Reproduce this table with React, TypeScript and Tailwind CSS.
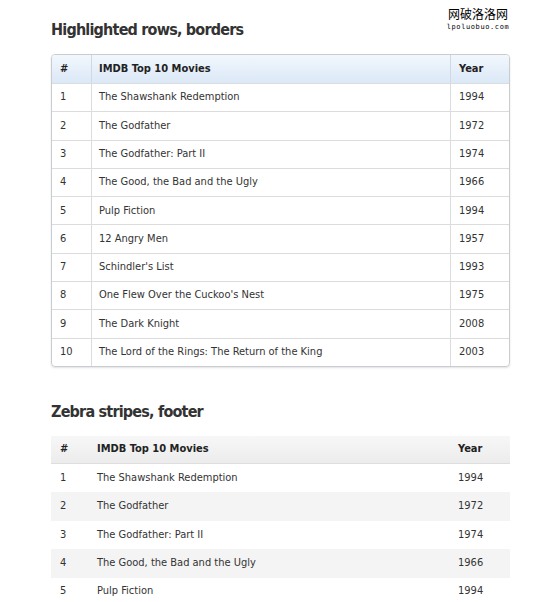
import React from "react";

const movies = [
  { id: 1, title: "The Shawshank Redemption", year: 1994 },
  { id: 2, title: "The Godfather", year: 1972 },
  { id: 3, title: "The Godfather: Part II", year: 1974 },
  { id: 4, title: "The Good, the Bad and the Ugly", year: 1966 },
  { id: 5, title: "Pulp Fiction", year: 1994 },
  { id: 6, title: "12 Angry Men", year: 1957 },
  { id: 7, title: "Schindler's List", year: 1993 },
  { id: 8, title: "One Flew Over the Cuckoo's Nest", year: 1975 },
  { id: 9, title: "The Dark Knight", year: 2008 },
  { id: 10, title: "The Lord of the Rings: The Return of the King", year: 2003 },
];

const font = { fontFamily: '"DejaVu Sans Condensed", "DejaVu Sans", sans-serif' };

// Tabla con bordes y cabecera azul
function BorderedTable() {
  return (
    <div className="w-[459px] rounded-[4px] border border-[#c9cdd2] overflow-hidden shadow-[0_1px_2px_rgba(0,0,0,0.12)]">
      <div className="grid grid-cols-[40px_359px_1fr] h-[28px] bg-gradient-to-b from-[#f2f7fd] to-[#dbe8f7] font-bold text-[#222]">
        <div className="pl-[8px] flex items-center border-r border-[#cfd8e3]">#</div>
        <div className="pl-[7px] flex items-center border-r border-[#cfd8e3]">IMDB Top 10 Movies</div>
        <div className="pl-[8px] flex items-center">Year</div>
      </div>
      {movies.map((m) => (
        <div key={m.id} className="grid grid-cols-[40px_359px_1fr] h-[28.3px] border-t border-[#dcdcdc] text-[#333]">
          <div className="pl-[8px] flex items-center border-r border-[#dcdcdc]">{m.id}</div>
          <div className="pl-[7px] flex items-center border-r border-[#dcdcdc]">{m.title}</div>
          <div className="pl-[8px] flex items-center">{m.year}</div>
        </div>
      ))}
    </div>
  );
}

// Tabla con filas alternas
function ZebraTable() {
  return (
    <div className="w-[459px]">
      <div className="grid grid-cols-[37px_362px_1fr] h-[28px] bg-gradient-to-b from-[#f7f7f7] to-[#ececec] border-b border-[#dedede] font-bold text-[#222]">
        <div className="pl-[9px] flex items-center">#</div>
        <div className="pl-[9px] flex items-center">IMDB Top 10 Movies</div>
        <div className="pl-[8px] flex items-center">Year</div>
      </div>
      {movies.slice(0, 5).map((m, i) => (
        <div
          key={m.id}
          className={`grid grid-cols-[37px_362px_1fr] h-[28.4px] text-[#333] ${i % 2 === 1 ? "bg-[#f4f4f4]" : "bg-white"}`}
        >
          <div className="pl-[9px] flex items-center">{m.id}</div>
          <div className="pl-[9px] flex items-center">{m.title}</div>
          <div className="pl-[8px] flex items-center">{m.year}</div>
        </div>
      ))}
    </div>
  );
}

export default function App() {
  return (
    <div className="relative w-[550px] h-[602px] bg-white overflow-hidden text-[11px]" style={font}>
      {/* Marca de agua */}
      <div className="absolute left-[440px] top-[8px] w-[76px] flex flex-col items-center leading-none">
        <span className="text-[12px] text-black" style={{ fontFamily: '"Noto Sans CJK SC", sans-serif' }}>网破洛洛网</span>
        <span className="text-[7px] tracking-[0.6px] text-black mt-[4px]" style={{ fontFamily: '"DejaVu Sans Mono", monospace' }}>lpoluobuo.com</span>
      </div>

      <div className="pl-[51px] pt-[19px]">
        <h2 className="text-[16px] tracking-[-0.8px] font-bold text-[#333] leading-[22px] mb-[13px]">Highlighted rows, borders</h2>
        <BorderedTable />

        <h2 className="text-[16px] tracking-[-0.8px] font-bold text-[#333] leading-[22px] mt-[34px] mb-[13px]">Zebra stripes, footer</h2>
        <ZebraTable />
      </div>
    </div>
  );
}
